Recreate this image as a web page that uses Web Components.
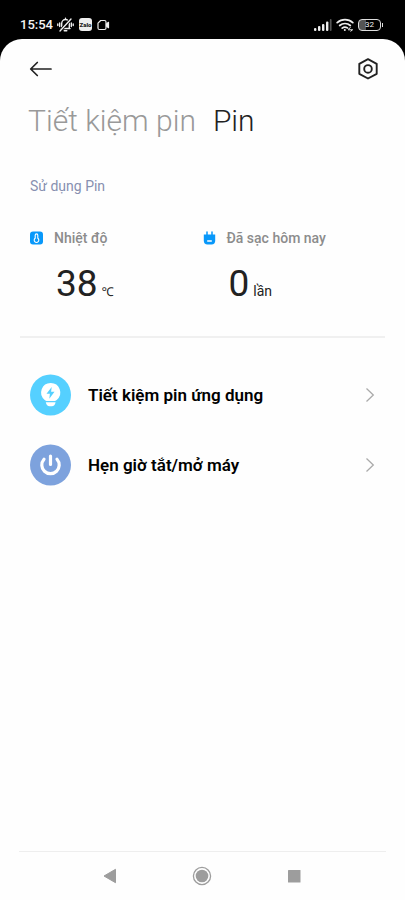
<!DOCTYPE html>
<html lang="vi">
<head>
<meta charset="utf-8">
<meta name="viewport" content="width=device-width, initial-scale=1">
<title>Pin</title>
<style>
  html, body { margin: 0; background: #000; }
  body { font-family: Roboto, "Noto Sans", sans-serif; color: #000; }
</style>
</head>
<body>
<battery-screen></battery-screen>
<script>
const define = (name, html) => {
  const template = document.createElement('template');
  template.innerHTML = html;
  customElements.define(name, class extends HTMLElement {
    constructor() {
      super();
      this.attachShadow({ mode: 'open' }).append(template.content.cloneNode(true));
    }
  });
};

define('status-bar', `
  <style>
    :host { display: flex; align-items: center; height: 39px; padding: 10px 22px 0 20px; box-sizing: border-box; background: #000; color: #f4f4f4; }
    time { font-size: 13px; line-height: 18px; font-weight: 500; }
    svg { display: block; flex: none; }
    .left, .right { display: flex; align-items: center; }
    .left { gap: 4px; }
    .right { gap: 4px; margin-left: auto; }
    .zalo { font: 900 6px/13px Roboto, sans-serif; width: 13px; height: 13px; border-radius: 3px; background: #eee; color: #222; text-align: center; margin: 0 1px; overflow: hidden; }
    .battery { display: flex; align-items: center; gap: 1px; }
    .level { box-sizing: border-box; width: 23px; height: 12px; border: 1px solid #ddd; border-radius: 4px; background: linear-gradient(90deg, #555 32%, #000 32%); font-size: 8px; line-height: 10px; text-align: center; }
    .tip { width: 1px; height: 4px; background: #ddd; }
  </style>
  <div class="left">
    <time>15:54</time>
    <svg width="17" height="16" viewBox="0 0 17 16" fill="none" stroke="#eee" stroke-width="1.400" stroke-linecap="round"><path d="M4 11.500h9M4.700 11V6.500a3.800 4 0 0 1 7.600 0V11M7.200 13.700h2.600M2.700 6v3.500M14.300 6v3.500M.8 7v1.500M16.200 7v1.500M8.500 2V1.300"/><path d="M3 14 14 2" stroke="#000" stroke-width="3"/><path d="M3 14 14 2"/></svg>
    <span class="zalo">Zalo</span>
    <svg width="13" height="12" viewBox="0 0 13 12" fill="none" stroke="#eee" stroke-width="1.200" stroke-linejoin="round"><path d="M3.700 1.500h3.800q1.500 0 1.500 1.500v6q0 1.500-1.500 1.500h-5q-1.500 0-1.500-1.500V4.200z"/><path d="m9.500 5 2-1.700v5.400L9.500 7z" fill="#eee"/></svg>
  </div>
  <div class="right">
    <svg width="18" height="12" viewBox="0 0 18 12" fill="#eee"><rect y="9" width="2.400" height="3" rx="1"/><rect x="4" y="7" width="2.400" height="5" rx="1"/><rect x="8" y="5" width="2.400" height="7" rx="1"/><rect x="12" y="2.500" width="2.400" height="9.500" rx="1"/><rect x="15.800" width="1.800" height="12" rx=".9" fill="#555"/></svg>
    <svg width="18" height="14" viewBox="0 0 18 14" fill="none" stroke="#eee" stroke-width="1.700" stroke-linecap="round"><path d="M1.200 4.700a11.500 11.500 0 0 1 15.600 0M3.700 7.500a8 8 0 0 1 10.600 0M6.200 10.100a4.300 4.300 0 0 1 5.200-.2"/><circle cx="8.800" cy="12" r="1" fill="#eee" stroke="none"/><path d="m12.500 11 1.800-1.300m.5 3.500 1.700-1.400m-4 0h3.500" stroke-width="1"/></svg>
    <div class="battery"><span class="level">32</span><i class="tip"></i></div>
  </div>`);

define('app-header', `
  <style>
    :host { display: flex; justify-content: space-between; align-items: center; padding: 17px 25px 0 28px; }
    button { display: block; border: 0; padding: 0; background: none; color: #222; cursor: pointer; }
    svg { display: block; }
  </style>
  <button aria-label="Quay lại"><svg width="24" height="26" viewBox="0 0 24 26" fill="none" stroke="currentColor" stroke-width="1.700" stroke-linecap="round" stroke-linejoin="round"><path d="M9.300 6.500 2.700 13l6.600 6.500M3 13h20"/></svg></button>
  <button aria-label="Cài đặt"><svg width="24" height="26" viewBox="0 0 24 26" fill="none" stroke="currentColor" stroke-width="1.900" stroke-linejoin="round"><path d="m12 3.200 8.700 4.600v10L12 22.500l-8.700-4.700v-10z"/><circle cx="12" cy="12.900" r="3.800"/></svg></button>`);

define('page-tabs', `
  <style>
    :host { display: flex; gap: 17px; padding: 19px 28px 0; }
    ::slotted(button) { border: 0; padding: 0; background: none; font: 300 30px/40px Roboto, "Noto Sans", sans-serif; color: #999; cursor: pointer; }
    ::slotted(button[aria-selected="true"]) { color: #222; }
  </style>
  <slot></slot>`);

define('stat-block', `
  <style>
    :host { display: block; flex: 1; }
    .head { display: flex; align-items: center; gap: 11px; font-size: 14px; line-height: 20px; font-weight: 500; color: #8c8c8c; }
    .value { display: flex; align-items: baseline; gap: 4px; padding: 12px 0 0 26px; color: #222; }
    .number { font-size: 37px; line-height: 48px; }
    .unit { font-size: 14px; }
    ::slotted(.degree) { font-size: 12px; }
  </style>
  <div class="head"><slot name="icon"></slot><slot></slot></div>
  <div class="value"><span class="number"><slot name="number"></slot></span><span class="unit"><slot name="unit"></slot></span></div>`);

define('menu-row', `
  <style>
    :host { display: block; }
    button { display: flex; align-items: center; width: 100%; height: 70px; padding: 0 30px; border: 0; background: none; color: #000; font: 600 17px/24px Roboto, "Noto Sans", sans-serif; text-align: left; cursor: pointer; }
    .label { flex: 1; padding-left: 17px; }
    svg { display: block; }
  </style>
  <button><slot name="icon"></slot><span class="label"><slot></slot></span>
  <svg width="10" height="16" viewBox="0 0 10 16" fill="none" stroke="#aaa" stroke-width="1.300"><path d="m1.500 1.500 6.800 6.500-6.800 6.500"/></svg></button>`);

define('nav-bar', `
  <style>
    :host { display: block; margin: 0 19px; border-top: 1px solid #eee; }
    nav { display: grid; grid-template-columns: repeat(3, 92px); justify-content: center; height: 48px; padding-right: 2px; }
    button { display: grid; place-items: center; border: 0; padding: 0; background: none; color: #9d9d9d; cursor: pointer; }
    svg { display: block; }
  </style>
  <nav>
    <button aria-label="Trở về"><svg width="20" height="20" viewBox="0 0 20 20"><path d="M4 10 15.500 3.300v13.400z" fill="currentColor" stroke="currentColor" stroke-linejoin="round"/></svg></button>
    <button aria-label="Màn hình chính"><svg width="20" height="20" viewBox="0 0 20 20"><circle cx="10" cy="10" r="8.600" fill="none" stroke="currentColor" stroke-width="1.300"/><circle cx="10" cy="10" r="6.300" fill="currentColor"/></svg></button>
    <button aria-label="Ứng dụng gần đây"><svg width="20" height="20" viewBox="0 0 20 20"><rect x="4" y="4" width="12.500" height="12.500" rx=".5" fill="currentColor"/></svg></button>
  </nav>`);

define('battery-screen', `
  <style>
    :host { display: flex; flex-direction: column; min-height: 100vh; }
    .sheet { flex: 1; display: flex; flex-direction: column; background: #fefefe; border-radius: 22px 22px 0 0; }
    main { flex: 1; }
    h2 { margin: 0; padding: 35px 30px 0; font-size: 14px; line-height: 20px; font-weight: 400; color: #8790b0; }
    .stats { display: flex; padding: 32px 30px 0; }
    hr { margin: 28px 20px 22px; border: 0; height: 2px; background: #f0f0f0; }
    svg { display: block; flex: none; }
  </style>
  <status-bar></status-bar>
  <div class="sheet">
    <app-header></app-header>
    <page-tabs role="tablist"><button role="tab" aria-selected="false">Tiết kiệm pin</button><button role="tab" aria-selected="true">Pin</button></page-tabs>
    <main>
      <h2>Sử dụng Pin</h2>
      <div class="stats">
        <stat-block>
          <svg slot="icon" width="13" height="14" viewBox="0 0 13 14"><rect y=".5" width="13" height="13" rx="3" fill="#0898fa"/><path d="M5.200 4.200a1.300 1.300 0 0 1 2.600 0v3.100a2.300 2.300 0 1 1-2.600 0z" fill="none" stroke="#fff" stroke-width="1.100"/></svg>
          Nhiệt độ<span slot="number">38</span><span slot="unit" class="degree">℃</span>
        </stat-block>
        <stat-block>
          <svg slot="icon" width="13" height="14" viewBox="0 0 13 14"><path d="M.8 3.500h11.400v6.300q0 3.700-3.700 3.700h-4Q.8 13.500.8 9.800z" fill="#0898fa"/><path d="M4 1v3M9 1v3" stroke="#0898fa" stroke-width="1.500" stroke-linecap="round"/><path d="M4.200 10h4.600" stroke="#fff" stroke-width="1.500"/></svg>
          Đã sạc hôm nay<span slot="number">0</span><span slot="unit">lần</span>
        </stat-block>
      </div>
      <hr>
      <menu-row>
        <svg slot="icon" width="41" height="42" viewBox="0 0 41 42"><circle cx="20.500" cy="21" r="20.500" fill="#55d0ff"/><path d="M20.700 9a9.500 9.500 0 0 1 6 16.900q-1.200 1-1.900 1.100h-8.200q-.7-.1-1.900-1.100A9.500 9.500 0 0 1 20.700 9zM15.800 28.300h9.800q-.8 4-3.800 4h-2.200q-3 0-3.800-4z" fill="#fff"/><path d="m21.700 13-5.200 6.700h3.400l-.6 5 5.200-6.900h-3.400z" fill="#55d0ff"/></svg>
        Tiết kiệm pin ứng dụng
      </menu-row>
      <menu-row>
        <svg slot="icon" width="41" height="42" viewBox="0 0 41 42"><circle cx="20.500" cy="21" r="20.500" fill="#7da2dd"/><path d="M14 15.200a8.700 8.700 0 1 0 13 0M20.500 12v8.500" fill="none" stroke="#fff" stroke-width="3.200" stroke-linecap="round"/></svg>
        Hẹn giờ tắt/mở máy
      </menu-row>
    </main>
    <nav-bar></nav-bar>
  </div>`);
</script>
</body>
</html>
